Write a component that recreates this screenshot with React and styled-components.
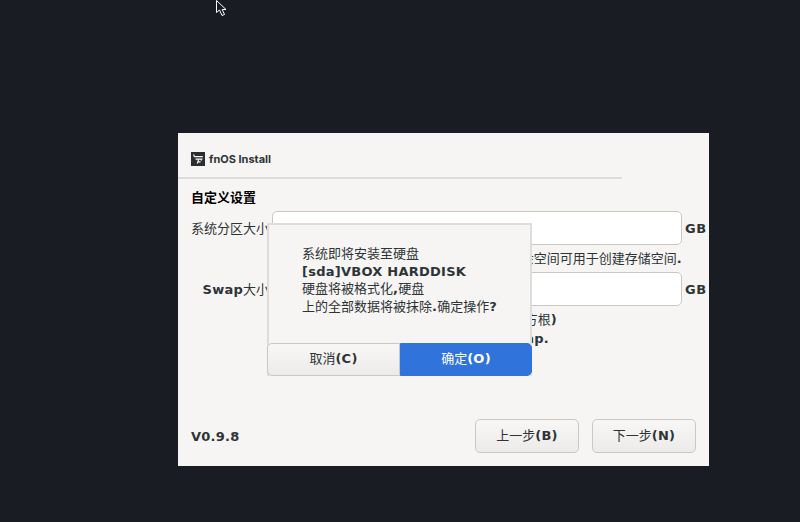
import React from "react";
import styled, { createGlobalStyle } from "styled-components";

const cjk = '"Noto Sans CJK SC", "Noto Sans CJK JP", sans-serif';

const GlobalStyle = createGlobalStyle`
  html, body {
    margin: 0;
    height: 100%;
    background: #191c22;
    overflow: hidden;
  }
  #root {
    height: 100%;
  }
`;

const Desktop = styled.div`
  position: relative;
  box-sizing: border-box;
  width: 800px;
  height: 522px;
  padding: 133px 0 0 178px;
  background: #191c22;
  font-family: "DejaVu Sans", ${cjk};
`;

const Cursor = styled.svg`
  position: absolute;
  left: 216px;
  top: 0;
  width: 12px;
  height: 17px;
`;

const Window = styled.div`
  position: relative;
  box-sizing: border-box;
  display: flex;
  flex-direction: column;
  width: 531px;
  height: 333px;
  background: #f6f5f4;
  color: #2e3436;
  font-family: ${cjk};
  font-size: 13px;
`;

// latin text renders bold in the installer, cjk stays regular
const L = styled.span`
  font-family: "DejaVu Sans", sans-serif;
  font-weight: 700;
  line-height: 1;
  letter-spacing: 0.25px;
`;

const Header = styled.div`
  display: flex;
  align-items: center;
  gap: 4px;
  box-sizing: border-box;
  width: 444px;
  height: 46px;
  padding: 7px 0 0 13px;
  border-bottom: 2px solid #dfdddb;
`;

const Title = styled.span`
  font-family: Inter, sans-serif;
  font-size: 11px;
  font-weight: 700;
  color: #2e3436;
`;

const Body = styled.div`
  display: flex;
  flex-direction: column;
  flex: 1;
  padding: 9px 13px 13px;
`;

const Heading = styled.div`
  font-size: 13px;
  line-height: 18px;
  font-weight: 700;
  color: #000;
  margin-bottom: 5px;
`;

const FieldRow = styled.div`
  display: grid;
  grid-template-columns: 78px 410px 1fr;
  column-gap: 3px;
  align-items: center;
`;

const Label = styled.label`
  text-align: right;
  white-space: nowrap;
  line-height: 34px;
`;

const Input = styled.div`
  box-sizing: border-box;
  height: 34px;
  background: #fff;
  border: 1px solid #cdc7c2;
  border-radius: 5px;
`;

const Unit = styled(L)`
  font-size: 13px;
  letter-spacing: 0.6px;
`;

const Hint = styled.div`
  box-sizing: border-box;
  width: 491px;
  height: 27px;
  padding: 3px 0 0 81px;
  text-align: right;
  line-height: 19px;
  white-space: nowrap;
  overflow: hidden;
`;

const Notes = styled.div`
  display: flex;
  flex-direction: column;
  width: 366px;
  padding-top: 3px;
  text-align: right;
  line-height: 19px;
  white-space: nowrap;
`;

const Note = styled.span`
  padding-right: ${p => p.$inset || 0}px;
`;

const Footer = styled.div`
  display: flex;
  align-items: center;
  margin-top: auto;
`;

const Version = styled(L)`
  flex: 1;
  font-size: 13px;
`;

const Button = styled.button`
  box-sizing: border-box;
  width: 104px;
  height: 34px;
  margin-left: 13px;
  padding: 0 0 3px;
  border: 1px solid #cdc7c2;
  border-radius: 5px;
  background: linear-gradient(#f8f7f6, #edebe9);
  color: #2e3436;
  font-family: ${cjk};
  font-size: 13px;
`;

const Dialog = styled.div`
  position: absolute;
  left: 89px;
  top: 90px;
  box-sizing: border-box;
  display: flex;
  flex-direction: column;
  width: 265px;
  height: 153px;
  background: #f6f5f4;
  border: solid #dfdddb;
  border-width: 2px 2px 0;
`;

const Message = styled.div`
  flex: 1;
  padding: 19px 0 0 33px;
  line-height: 17.7px;
  font-size: 13px;
  white-space: nowrap;
`;

const DialogActions = styled.div`
  display: grid;
  grid-template-columns: 133px 132px;
  margin: 0 -2px;
`;

const DialogButton = styled.button`
  box-sizing: border-box;
  height: 33px;
  padding: 0 0 5px;
  border: 1px solid ${p => (p.$primary ? "#3073da" : "#cdc7c2")};
  border-radius: ${p => (p.$primary ? "0 5px 5px 0" : "5px 0 0 5px")};
  background: ${p =>
    p.$primary ? "#3073da" : "linear-gradient(#f8f7f6, #edebe9)"};
  color: ${p => (p.$primary ? "#fff" : "#2e3436")};
  font-family: ${cjk};
  font-size: 13px;
`;

const App = () => (
  <Desktop>
    <GlobalStyle />
    <Cursor viewBox="0 0 12 17">
      <path
        d="M0.5 0.5 L0.5 12.5 L3.5 10 L6 15.5 L8.5 14.5 L6.2 9.5 L10 9.5 Z"
        fill="#191c22"
        stroke="#fff"
        strokeWidth="1"
      />
    </Cursor>
    <Window>
      <Header>
        <svg width="14" height="14" viewBox="0 0 14 14">
          <rect width="14" height="14" fill="#2a2d31" />
          <path
            d="M2.5 2.5 L3.5 4.7 L11.8 4.7 M4.5 7.2 L10.8 7.2 L10.2 8.6 M7.6 7.2 L6.4 11.5 M6.8 9.8 L9.6 9.8"
            fill="none"
            stroke="#f6f5f4"
            strokeWidth="1.2"
          />
        </svg>
        <Title>fnOS Install</Title>
      </Header>
      <Body>
        <Heading>自定义设置</Heading>
        <FieldRow>
          <Label>系统分区大小</Label>
          <Input />
          <Unit>GB</Unit>
        </FieldRow>
        <Hint>系统分区之外的剩余空间可用于创建存储空间<L>.</L></Hint>
        <FieldRow>
          <Label><L>Swap</L>大小</Label>
          <Input />
          <Unit>GB</Unit>
        </FieldRow>
        <Notes>
          <Note>建议大小为内存容量的平方根<L>)</L></Note>
          <Note $inset={8}><L>0 GB</L>表示不创建<L>Swap.</L></Note>
        </Notes>
        <Footer>
          <Version>V0.9.8</Version>
          <Button>上一步<L>(B)</L></Button>
          <Button>下一步<L>(N)</L></Button>
        </Footer>
      </Body>
      <Dialog>
        <Message>
          系统即将安装至硬盘<br />
          <L>[sda]VBOX HARDDISK</L><br />
          硬盘将被格式化<L>,</L>硬盘<br />
          上的全部数据将被抹除<L>.</L>确定操作<L>?</L>
        </Message>
        <DialogActions>
          <DialogButton>取消<L>(C)</L></DialogButton>
          <DialogButton $primary>确定<L>(O)</L></DialogButton>
        </DialogActions>
      </Dialog>
    </Window>
  </Desktop>
);

export default App;
